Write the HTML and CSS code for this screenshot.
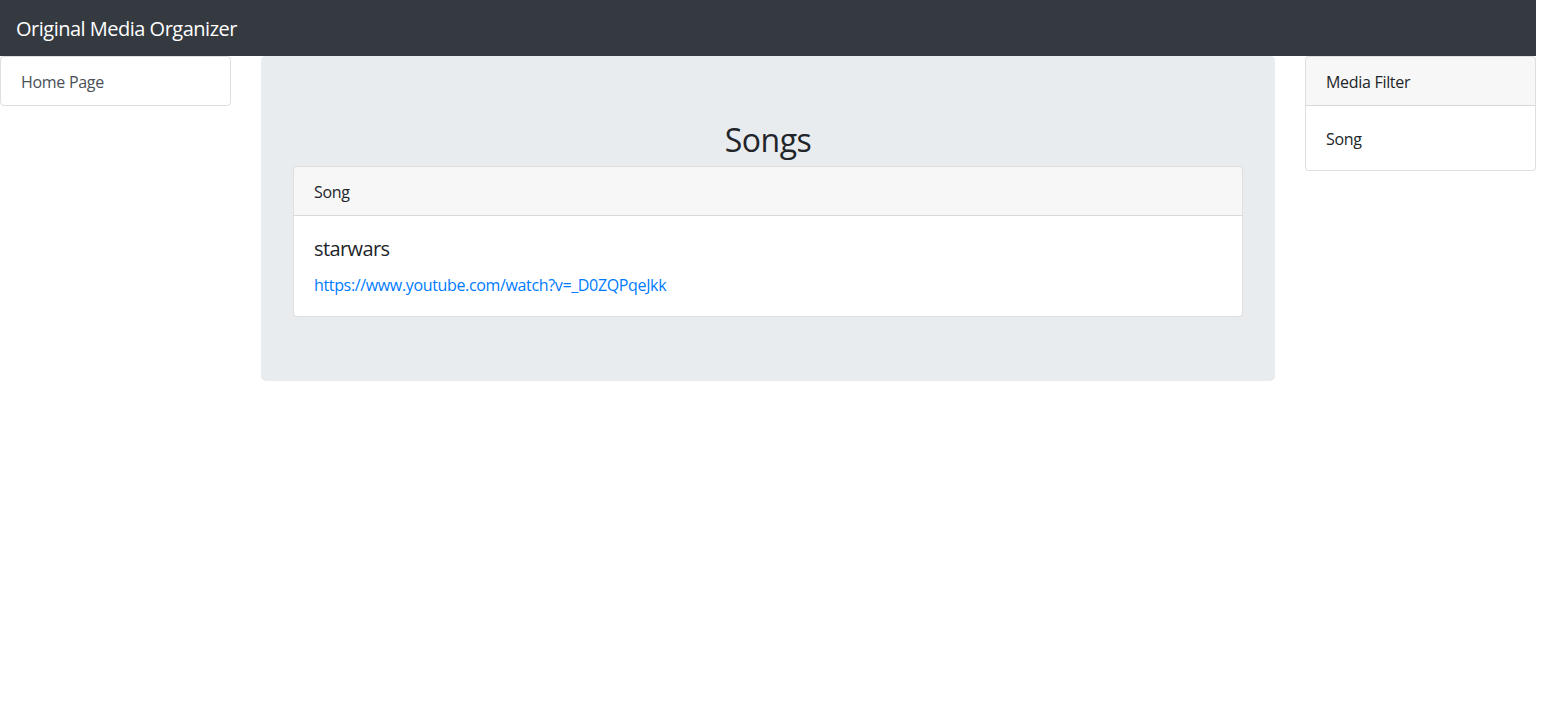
FILE: index.html
```html
<!DOCTYPE html>
<html lang="en">
<head>
<meta charset="utf-8">
<title>Original Media Organizer</title>
<link rel="stylesheet" href="styles.css">
</head>
<body>
<div class="page">
  <nav class="navbar">
    <a class="brand" href="#">Original Media Organizer</a>
  </nav>
  <div class="row">
    <div class="col-side">
      <ul class="list-group">
        <li class="list-item">Home Page</li>
      </ul>
    </div>
    <div class="col-main">
      <div class="jumbotron">
        <h2 class="title">Songs</h2>
        <div class="card">
          <div class="card-header">Song</div>
          <div class="card-body">
            <h5 class="card-title">starwars</h5>
            <p class="card-text"><a class="link" href="#">https://www.youtube.com/watch?v=_D0ZQPqeJkk</a></p>
          </div>
        </div>
      </div>
    </div>
    <div class="col-side">
      <div class="card">
        <div class="card-header">Media Filter</div>
        <div class="card-body">
          <p class="card-text">Song</p>
        </div>
      </div>
    </div>
  </div>
</div>
</body>
</html>
```

FILE: styles.css
```css
* { box-sizing: border-box; }
html, body { margin: 0; padding: 0; }
body {
  font-family: "Open Sans", "Noto Sans", "Liberation Sans", sans-serif;
  font-size: 16px;
  line-height: 1.5;
  color: #212529;
  background: #fff;
}
.page {
  width: 1536px;
  overflow: hidden;
}
.navbar {
  background: #343a40;
  height: 56px;
  padding: 9px 16px 7px;
  display: flex;
  align-items: center;
}
.brand {
  color: #fff;
  text-decoration: none;
  font-size: 20px;
  line-height: 30px;
  letter-spacing: -0.5px;
}
.row {
  display: flex;
  margin: 0 -15px;
}
.col-side {
  flex: 0 0 16.666667%;
  max-width: 16.666667%;
  padding: 0 15px;
}
.col-main {
  flex: 0 0 66.666667%;
  max-width: 66.666667%;
  padding: 0 15px;
}
.list-group {
  list-style: none;
  margin: 0;
  padding: 0;
}
.list-item {
  border: 1px solid rgba(0,0,0,.125);
  border-radius: 4px;
  padding: 13px 20px 11px;
  color: #495057;
  letter-spacing: -0.3px;
}
.jumbotron {
  background: #e9ecef;
  border-radius: 4.8px;
  padding: 64px 32px;
}
.title {
  margin: 0 0 8px;
  padding-top: 1px;
  font-size: 32px;
  line-height: 37.4px;
  font-weight: 400;
  text-align: center;
  letter-spacing: -0.5px;
}
.card {
  background: #fff;
  border: 1px solid rgba(0,0,0,.125);
  border-radius: 4px;
  overflow: hidden;
}
.card-header {
  background: rgba(0,0,0,.03);
  border-bottom: 1px solid rgba(0,0,0,.125);
  padding: 13px 20px 11px;
  letter-spacing: -0.3px;
}
.card-body {
  padding: 21px 20px 19px;
}
.card-title {
  margin: 0 0 12px;
  font-size: 20px;
  line-height: 1.2;
  font-weight: 400;
  letter-spacing: -0.6px;
}
.card-text {
  margin: 0;
  letter-spacing: -0.35px;
}
.link {
  color: #007bff;
  text-decoration: none;
}
```
